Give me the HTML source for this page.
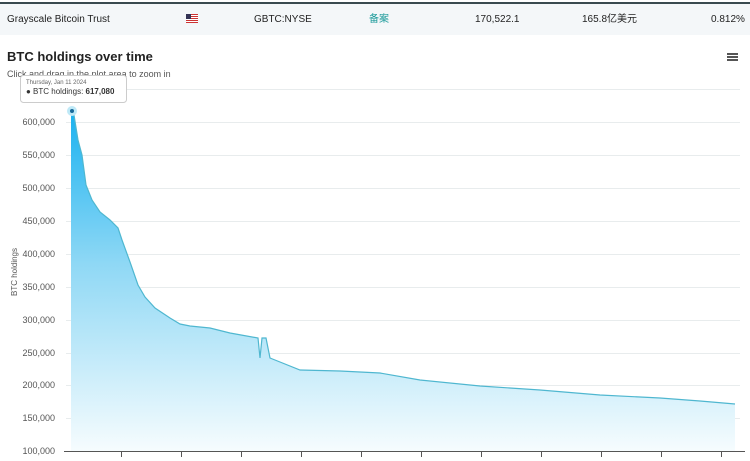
<!DOCTYPE html><html><head><style>
body{margin:0;width:750px;height:461px;background:#fff;font-family:"Liberation Sans","Noto Sans CJK SC",sans-serif;overflow:hidden;position:relative}
.row{position:absolute;left:0;top:2px;width:750px;height:31px;background:#f4f7f9;border-top:2px solid #3a4a50;font-size:10px;line-height:12px;color:#222}
.row span{position:absolute;top:10px;height:12px;line-height:12px}
</style></head><body>
<div class="row">
<span style="left:7px">Grayscale Bitcoin Trust</span>
<span style="left:186px;top:10px;width:12px;height:9px;background:repeating-linear-gradient(#c33 0 1px,#fff 1px 2px)"><i style="position:absolute;left:0;top:0;width:5px;height:5px;background:#335"></i></span>
<span style="left:254px">GBTC:NYSE</span>
<span style="left:369px;color:#1a9a9a">备案</span>
<span style="left:475px">170,522.1</span>
<span style="left:582px">165.8亿美元</span>
<span style="left:711px">0.812%</span>
</div>
<div style="position:absolute;left:7px;top:49px;font-size:13px;font-weight:bold;color:#222">BTC holdings over time</div>
<div style="position:absolute;left:727px;top:53px;width:11px;height:2px;background:#555;box-shadow:0 3px #555,0 6px #555"></div>
<div style="position:absolute;left:7px;top:69px;font-size:9px;color:#555">Click and drag in the plot area to zoom in</div>
<svg style="position:absolute;left:0;top:0" width="750" height="461">
<defs><linearGradient id="g" x1="0" y1="0" x2="0" y2="1"><stop offset="0" stop-color="#1ab2f0"/><stop offset="0.45" stop-color="#8fd8f5"/><stop offset="1" stop-color="#f6fcfe"/></linearGradient></defs>
<g stroke="#e8eced" stroke-width="1">
<line x1="66" x2="740" y1="89.5" y2="89.5"/><line x1="66" x2="740" y1="122.5" y2="122.5"/><line x1="66" x2="740" y1="155.5" y2="155.5"/><line x1="66" x2="740" y1="188.5" y2="188.5"/><line x1="66" x2="740" y1="221.5" y2="221.5"/><line x1="66" x2="740" y1="254.5" y2="254.5"/><line x1="66" x2="740" y1="287.5" y2="287.5"/><line x1="66" x2="740" y1="320.5" y2="320.5"/><line x1="66" x2="740" y1="353.5" y2="353.5"/><line x1="66" x2="740" y1="385.5" y2="385.5"/><line x1="66" x2="740" y1="418.5" y2="418.5"/></g>
<path d="M71,111 L74,115 78,140 82,155 86,185 92,200 100,212 110,220 118,228 122,240 130,262 138,285 145,297 155,308 170,318 180,324 190,326 210,328 230,333 258,338 260,358 262,338 266,338 270,358 280,362 300,370 340,371 380,373 420,380 480,386 540,390 600,395 660,398 700,401 735,404 L735,451 L71,451Z" fill="url(#g)"/>
<path d="M71,111 L74,115 78,140 82,155 86,185 92,200 100,212 110,220 118,228 122,240 130,262 138,285 145,297 155,308 170,318 180,324 190,326 210,328 230,333 258,338 260,358 262,338 266,338 270,358 280,362 300,370 340,371 380,373 420,380 480,386 540,390 600,395 660,398 700,401 735,404" fill="none" stroke="#4fb7d0" stroke-width="1.2"/>
<line x1="64" x2="745" y1="451.5" y2="451.5" stroke="#555"/>
<g stroke="#555"><line x1="121.5" x2="121.5" y1="452" y2="457"/><line x1="181.5" x2="181.5" y1="452" y2="457"/><line x1="241.5" x2="241.5" y1="452" y2="457"/><line x1="301.5" x2="301.5" y1="452" y2="457"/><line x1="361.5" x2="361.5" y1="452" y2="457"/><line x1="421.5" x2="421.5" y1="452" y2="457"/><line x1="481.5" x2="481.5" y1="452" y2="457"/><line x1="541.5" x2="541.5" y1="452" y2="457"/><line x1="601.5" x2="601.5" y1="452" y2="457"/><line x1="661.5" x2="661.5" y1="452" y2="457"/><line x1="721.5" x2="721.5" y1="452" y2="457"/></g>
<g font-size="9" fill="#555" text-anchor="end" font-family="Liberation Sans">
<text x="55" y="125">600,000</text><text x="55" y="158">550,000</text><text x="55" y="191">500,000</text><text x="55" y="224">450,000</text><text x="55" y="257">400,000</text><text x="55" y="290">350,000</text><text x="55" y="323">300,000</text><text x="55" y="356">250,000</text><text x="55" y="388">200,000</text><text x="55" y="421">150,000</text><text x="55" y="454">100,000</text></g>
<text transform="translate(17,272) rotate(-90)" font-size="8" fill="#555" text-anchor="middle" font-family="Liberation Sans">BTC holdings</text>
<circle cx="72" cy="111" r="5" fill="#bfe9f7"/><circle cx="72" cy="111" r="2" fill="#1a6a9a"/>
<rect x="20.5" y="75.5" width="106" height="27" rx="3" fill="#fff" stroke="#ccc"/>
<text x="26" y="84" font-size="6" fill="#666" font-family="Liberation Sans">Thursday, Jan 11 2024</text>
<text x="26" y="94" font-size="8" fill="#333" font-family="Liberation Sans">● BTC holdings: <tspan font-weight="bold">617,080</tspan></text>
</svg>
</body></html>
